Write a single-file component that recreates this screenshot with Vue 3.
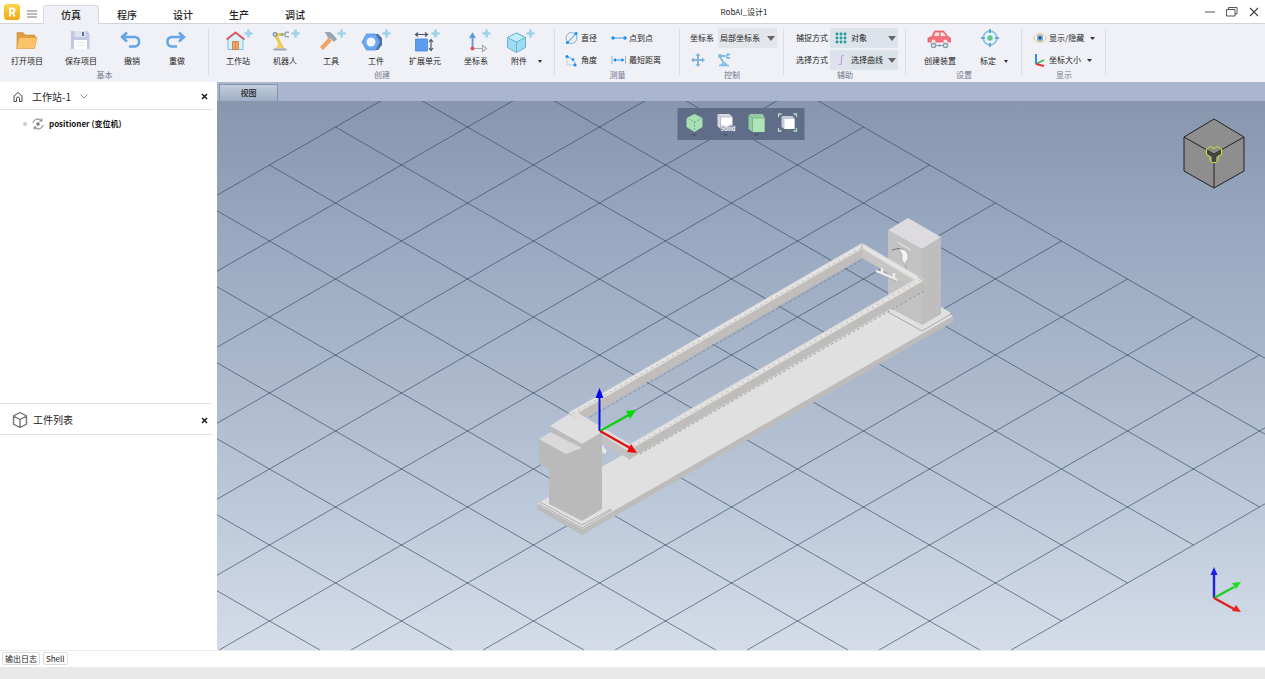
<script setup>
import { ref } from 'vue'

const tabs = ['仿真', '程序', '设计', '生产', '调试']
const activeTab = ref(0)
const frameMode = ref('局部坐标系')
const snapMode = ref('对象')
const pickMode = ref('选择曲线')

// Ground grid: 12 x 12 isometric cells around the scene origin
const origin = { x: 599.5, y: 431 }
const cell = { x: 66, y: 38 }
const half = 6
const project = (i, j) => ({
  x: origin.x + (i + j) * cell.x,
  y: origin.y + (i - j) * cell.y
})
const gridLines = []
for (let k = -half; k <= half; k++) {
  gridLines.push([project(k, -half), project(k, half)])
  gridLines.push([project(-half, k), project(half, k)])
}
</script>

<template>
  <div class="app">
    <header class="titlebar">
      <svg class="logo" width="16" height="17" viewBox="0 0 16 17" aria-hidden="true">
        <defs>
          <linearGradient id="logoFill" x1="0" y1="0" x2="0" y2="1">
            <stop offset="0" stop-color="#ffd54a" /><stop offset="1" stop-color="#f0a71c" />
          </linearGradient>
        </defs>
        <rect y="1" width="16" height="16" rx="3" fill="url(#logoFill)" />
        <path d="M6 13.500V5.500h2.500a2 2 0 0 1 0 4.200H6M8.500 9.700l2.200 3.800" fill="none" stroke="#fff" stroke-width="1.800" />
      </svg>
      <button class="icon-btn menu" aria-label="菜单">
        <svg width="10" height="8" viewBox="0 0 10 8"><path d="M0 1h10M0 4h10M0 7h10" stroke="#777" /></svg>
      </button>
      <nav class="tabs">
        <button v-for="(t, i) in tabs" :key="t" class="tab" :class="{ active: i === activeTab }" @click="activeTab = i">{{ t }}</button>
      </nav>
      <div class="title">RobAI_设计1</div>
      <div class="window-controls">
        <button class="icon-btn" aria-label="最小化"><svg width="12" height="12" viewBox="0 0 12 12"><path d="M1 6h10" stroke="#555" /></svg></button>
        <button class="icon-btn" aria-label="还原"><svg width="12" height="12" viewBox="0 0 12 12"><path d="M.5 3.500h8.500v6.500h-8.500zM2.500 3.500v-2h8.500v6.500h-2" fill="none" stroke="#555" /></svg></button>
        <button class="icon-btn" aria-label="关闭"><svg width="12" height="12" viewBox="0 0 12 12"><path d="M2 2l8 8M10 2l-8 8" stroke="#444" stroke-width="1.200" /></svg></button>
      </div>
    </header>

    <svg width="0" height="0" class="defs" aria-hidden="true">
      <symbol id="plus" viewBox="0 0 10 10"><path d="M5 .5v9M.5 5h9" stroke="#9fd3e8" stroke-width="3" /></symbol>
    </svg>

    <section class="ribbon">
      <div class="group">
        <div class="big-row basics">
          <button class="big">
            <svg width="32" height="24" viewBox="0 0 32 24">
              <path d="M6 19V3.500h6l2 2.500h10v4" fill="#e0a040" stroke="#c98a35" stroke-width=".6" />
              <path d="M5.500 19.500l2.500-11h18l-2.500 11z" fill="#fbc469" stroke="#d9963c" stroke-width=".6" />
            </svg>
            <span>打开项目</span>
          </button>
          <button class="big">
            <svg width="32" height="24" viewBox="0 0 32 24">
              <path d="M6 2h16l2.500 2.500V20H6z" fill="#c3c7e4" />
              <path d="M9.500 2h11v6h-11z" fill="#dfe3f0" /><path d="M17 3h2v4h-2z" fill="#5d6c94" />
              <path d="M9 11h13v9H9z" fill="#fff" /><path d="M11 13.500h9M11 16h9" stroke="#dcdfe9" stroke-width=".8" />
            </svg>
            <span>保存项目</span>
          </button>
          <button class="big">
            <svg width="32" height="24" viewBox="0 0 32 24"><path d="M11 3.500L6 8l5 4.500M7 8h12a4.800 4.800 0 0 1 0 9.500H13" fill="none" stroke="#62a4e4" stroke-width="2.500" /></svg>
            <span>撤销</span>
          </button>
          <button class="big">
            <svg width="32" height="24" viewBox="0 0 32 24"><path d="M18 3.500L23 8l-5 4.500M22 8H10.500a4.800 4.800 0 0 0 0 9.500h5.500" fill="none" stroke="#62a4e4" stroke-width="2.500" /></svg>
            <span>重做</span>
          </button>
        </div>
        <div class="caption">基本</div>
      </div>

      <div class="group">
        <div class="big-row create">
          <button class="big">
            <svg width="32" height="24" viewBox="0 0 32 24">
              <path d="M6 10l7.500-6L21 10v10.500H6z" fill="#d5f1fa" stroke="#7cc3de" />
              <path d="M10.500 12.500h6v8h-6z" fill="#f5a25f" stroke="#c9763f" stroke-width=".8" /><path d="M13.500 13v7" stroke="#c9763f" stroke-width=".6" />
              <path d="M4.500 10.500l9-7 9 7" fill="none" stroke="#e0525e" stroke-width="1.800" />
              <use href="#plus" x="22" y="0" width="9" height="9" />
            </svg>
            <span>工作站</span>
          </button>
          <button class="big">
            <svg width="32" height="24" viewBox="0 0 32 24">
              <path d="M6 5.500h9M7 7l5 9.500" stroke="#ecca4f" stroke-width="3.200" fill="none" />
              <path d="M7 19.500l1.500-4h5l2 4z" fill="#edcf62" /><path d="M4.500 20.500h13" stroke="#9aa6b5" stroke-width="2" />
              <circle cx="6" cy="5.500" r="2.400" fill="#7f93a8" /><circle cx="6" cy="5.500" r="1" fill="#e8edf2" />
              <circle cx="13" cy="5.500" r="1.300" fill="#8b9caf" />
              <path d="M20 3.200h-3l-1 1v2.600l1 1h3" fill="none" stroke="#97a5b5" stroke-width="1.500" />
              <use href="#plus" x="22" y="0" width="9" height="9" />
            </svg>
            <span>机器人</span>
          </button>
          <button class="big">
            <svg width="32" height="24" viewBox="0 0 32 24">
              <path d="M6.500 19.500L15.500 10" stroke="#f1a262" stroke-width="4.200" />
              <path d="M9.500 3.500q5-2 7.500 1l5 5.500-3 3-3-3.500-3.500-1q-.5-3-3-5z" fill="#98a5b2" />
              <use href="#plus" x="22" y="0" width="9" height="9" />
            </svg>
            <span>工具</span>
          </button>
          <button class="big">
            <svg width="32" height="24" viewBox="0 0 32 24">
              <path d="M11 5h7l4 4v7l-4 5h-7z" fill="#54708f" />
              <path d="M6.500 5h9l4.500 8-4.500 8h-9L2 13z" fill="#6aa7f5" stroke="#4b8ee6" stroke-width=".8" />
              <circle cx="11" cy="13" r="4.500" fill="#f2f5fb" />
              <use href="#plus" x="22" y="0" width="9" height="9" />
            </svg>
            <span>工件</span>
          </button>
          <button class="big">
            <svg width="32" height="24" viewBox="0 0 32 24">
              <path d="M6.500 10h12v12h-12z" fill="#5b9cf0" stroke="#4487dc" stroke-width=".8" />
              <path d="M7 5.500h11M9 3.500l-2.500 2L9 7.500M16 3.500l2.500 2-2.500 2M22 11v10M20 13l2-2.500 2 2.500M20 19l2 2.500 2-2.500" fill="none" stroke="#47596d" stroke-width="1.200" />
              <use href="#plus" x="22" y="0" width="9" height="9" />
            </svg>
            <span>扩展单元</span>
          </button>
          <button class="big">
            <svg width="32" height="24" viewBox="0 0 32 24">
              <path d="M12.500 19V7M10 9l2.500-4L15 9" fill="none" stroke="#5f95dd" stroke-width="1.800" />
              <path d="M13 19.500h10M22.500 16.500l4 3-4 3z" fill="#fff" stroke="#aaa" stroke-width="1.200" />
              <circle cx="12.500" cy="19.500" r="2" fill="#e04b5a" />
              <use href="#plus" x="22" y="0" width="9" height="9" />
            </svg>
            <span>坐标系</span>
          </button>
          <button class="big">
            <svg width="32" height="24" viewBox="0 0 32 24">
              <path d="M13.500 4l9 4.500v10l-9 5-9-5v-10z" fill="#9ddcf2" stroke="#68b4d0" />
              <path d="M13.500 4l9 4.500-9 4.500-9-4.500z" fill="#c3edf9" stroke="#68b4d0" /><path d="M13.500 13v10" stroke="#68b4d0" />
              <use href="#plus" x="23" y="0" width="9" height="9" />
            </svg>
            <span>附件</span>
          </button>
          <button class="drop" aria-label="更多附件"><svg width="4" height="3" viewBox="0 0 4 3"><path d="M0 0h4L2 3z" fill="#333" /></svg></button>
        </div>
        <div class="caption">创建</div>
      </div>

      <div class="group">
        <div class="small-grid measure">
          <button class="small">
            <svg width="14" height="14" viewBox="0 0 14 14"><circle cx="6.500" cy="7" r="5.500" fill="none" stroke="#88aecb" /><path d="M2.500 11.500l8.500-9" stroke="#2793ef" /><circle cx="2.500" cy="11.500" r="1.600" fill="#1b8df2" /><circle cx="11" cy="2.500" r="1.600" fill="#1b8df2" /></svg>
            直径
          </button>
          <button class="small">
            <svg width="16" height="14" viewBox="0 0 16 14"><path d="M2 7h12" stroke="#3c9bef" /><circle cx="2" cy="7" r="1.700" fill="#1b8df2" /><circle cx="14" cy="7" r="1.700" fill="#1b8df2" /></svg>
            点到点
          </button>
          <button class="small">
            <svg width="14" height="14" viewBox="0 0 14 14"><path d="M2 3v9h9" fill="none" stroke="#c3d0db" /><path d="M2 4q7 1 8.500 8" fill="none" stroke="#65aee9" /><circle cx="2" cy="3.500" r="1.600" fill="#1b8df2" /><circle cx="8" cy="6.500" r="1.300" fill="#1b8df2" /><circle cx="10" cy="12" r="1.600" fill="#1b8df2" /></svg>
            角度
          </button>
          <button class="small">
            <svg width="16" height="14" viewBox="0 0 16 14"><path d="M1 3v8M14.500 3v8" stroke="#9fb3c6" /><path d="M3 7h10" stroke="#2793ef" /><path d="M2 7l3-2v4zM13.500 7l-3-2v4z" fill="#1b8df2" /></svg>
            最短距离
          </button>
        </div>
        <div class="caption">测量</div>
      </div>

      <div class="group">
        <div class="rows control">
          <div class="field">
            <label for="frame">坐标系</label>
            <div class="picker pale">
              <select id="frame" v-model="frameMode"><option>局部坐标系</option></select>
              <svg class="arrow" width="8" height="5" viewBox="0 0 8 5"><path d="M0 0h8L4 5z" fill="#666" /></svg>
            </div>
          </div>
          <div class="tools">
            <button class="icon-btn" aria-label="移动"><svg width="14" height="14" viewBox="0 0 14 14"><path d="M7 2v10M2 7h10" stroke="#84b6dc" stroke-width="2" /><path d="M7 0l2.800 3H4.200zM7 14l2.800-3H4.200zM0 7l3-2.800v5.600zM14 7l-3-2.800v5.600z" fill="#84b6dc" /></svg></button>
            <button class="icon-btn" aria-label="机器人关节"><svg width="14" height="14" viewBox="0 0 14 14"><path d="M2 3h6M3 4l4 6M13 1.500h-2.500l-1 1v1.500l1 1H13" fill="none" stroke="#7cbbe6" stroke-width="1.800" /><circle cx="3" cy="3" r="2" fill="#7cbbe6" /><path d="M3 12.500l2-3h4l2 3z" fill="#8cc4ea" /><path d="M2 12.500h10" stroke="#7cbbe6" stroke-width="1.500" /></svg></button>
          </div>
        </div>
        <div class="caption">控制</div>
      </div>

      <div class="group">
        <div class="rows assist">
          <div class="field">
            <label for="snap">捕捉方式</label>
            <div class="picker">
              <svg width="12" height="12" viewBox="0 0 12 12"><path d="M2 0v12M6 0v12M10 0v12M0 2h12M0 6h12M0 10h12" stroke="#b5d4da" stroke-width=".8" /><g fill="#259b9d"><circle v-for="n in 9" :key="n" :cx="2 + ((n - 1) % 3) * 4" :cy="2 + Math.floor((n - 1) / 3) * 4" r="1.400" /></g></svg>
              <select id="snap" v-model="snapMode"><option>对象</option></select>
              <svg class="arrow" width="8" height="5" viewBox="0 0 8 5"><path d="M0 0h8L4 5z" fill="#666" /></svg>
            </div>
          </div>
          <div class="field">
            <label for="pick">选择方式</label>
            <div class="picker">
              <svg width="12" height="12" viewBox="0 0 12 12"><path d="M3.500 10.500h1q2 0 2-2v-5q0-2 2-2h1" fill="none" stroke="#c99be6" stroke-width="1.200" /></svg>
              <select id="pick" v-model="pickMode"><option>选择曲线</option></select>
              <svg class="arrow" width="8" height="5" viewBox="0 0 8 5"><path d="M0 0h8L4 5z" fill="#666" /></svg>
            </div>
          </div>
        </div>
        <div class="caption">辅助</div>
      </div>

      <div class="group">
        <div class="big-row settings">
          <button class="big">
            <svg width="32" height="24" viewBox="0 0 32 24">
              <path d="M4 13V9l4-1.500L10.500 2h9L24 7.500l2.500 1.500v4z" fill="#f5717c" stroke="#df5965" stroke-width=".8" />
              <path d="M10 7l1.500-3.500H15V7zM16.500 3.500h2.500L22 7h-5.500z" fill="#fbe5e7" />
              <circle cx="9.500" cy="12.500" r="2" fill="#fbe5e7" /><circle cx="21.500" cy="12.500" r="2" fill="#fbe5e7" />
              <path d="M9.500 16.500h12" stroke="#8ba0b5" /><circle cx="9.500" cy="16.500" r="2.200" fill="#dbe4ec" stroke="#8298af" stroke-width="1.200" /><circle cx="21.500" cy="16.500" r="2.200" fill="#dbe4ec" stroke="#8298af" stroke-width="1.200" /><circle cx="15.500" cy="16.500" r="1" fill="#6d86a0" />
            </svg>
            <span>创建装置</span>
          </button>
          <button class="big">
            <svg width="32" height="24" viewBox="0 0 32 24"><circle cx="18" cy="9" r="6.800" fill="#e4f4fb" stroke="#8ec5e4" stroke-width="1.800" /><path d="M18 0v4M18 14v4M9 9h4M23 9h4" stroke="#4e93c8" stroke-width="1.500" /><circle cx="18" cy="9" r="2.700" fill="#66c391" /></svg>
            <span>标定</span>
          </button>
          <button class="drop" aria-label="更多标定"><svg width="4" height="3" viewBox="0 0 4 3"><path d="M0 0h4L2 3z" fill="#333" /></svg></button>
        </div>
        <div class="caption">设置</div>
      </div>

      <div class="group">
        <div class="rows display">
          <button class="small">
            <svg width="14" height="14" viewBox="0 0 14 14"><path d="M.5 7q6.500-8.500 13 0-6.500 8.500-13 0z" fill="#fff" stroke="#dcae5c" /><circle cx="7" cy="7" r="3" fill="#5b9bd8" /><circle cx="7" cy="7" r="1.300" fill="#24507e" /></svg>
            显示/隐藏
            <svg class="caret" width="5" height="3" viewBox="0 0 5 3"><path d="M0 0h5L2.500 3z" fill="#333" /></svg>
          </button>
          <button class="small">
            <svg width="14" height="14" viewBox="0 0 14 14"><path d="M3 1v10" stroke="#1c86d8" stroke-width="1.800" /><path d="M3 11l8-4" stroke="#3fb85c" stroke-width="1.800" /><path d="M3 11l8 2" stroke="#e3333a" stroke-width="2" /></svg>
            坐标大小
            <svg class="caret" width="5" height="3" viewBox="0 0 5 3"><path d="M0 0h5L2.500 3z" fill="#333" /></svg>
          </button>
        </div>
        <div class="caption">显示</div>
      </div>
    </section>

    <main class="workspace">
      <aside class="side">
        <section class="panel">
          <div class="panel-head">
            <svg width="12" height="12" viewBox="0 0 12 12"><path d="M2 10.500V5l4-3.500L10 5v5.500H7.500V7.500a1.500 1.500 0 0 0-3 0v3z" fill="none" stroke="#444" /></svg>
            <h2>工作站-1</h2>
            <svg width="8" height="5" viewBox="0 0 8 5"><path d="M.5.5L4 4 7.500.5" fill="none" stroke="#999" /></svg>
            <button class="icon-btn close" aria-label="关闭工作站"><svg width="7" height="7" viewBox="0 0 7 7"><path d="M1 1l5 5M6 1L1 6" stroke="#111" stroke-width="1.400" /></svg></button>
          </div>
          <ul class="tree">
            <li>
              <span class="dot"></span>
              <svg width="12" height="12" viewBox="0 0 12 12"><path d="M1 5A5 5 0 0 1 9.500 2.500M11 7A5 5 0 0 1 2.500 9.500M9.800.5v2.500H7.300M2.200 11.500V9h2.500" fill="none" stroke="#777" /><circle cx="6" cy="6" r="1.700" fill="#777" /></svg>
              <strong>positioner (变位机)</strong>
            </li>
          </ul>
        </section>
        <section class="panel parts">
          <div class="panel-head">
            <svg width="16" height="18" viewBox="0 0 16 18"><path d="M8 1.500l6.500 3.500v8L8 16.500 1.500 13V5zM1.500 5L8 8.500 14.500 5M8 8.500v8" fill="none" stroke="#777" stroke-width="1.400" /></svg>
            <h2>工件列表</h2>
            <button class="icon-btn close" aria-label="关闭工件列表"><svg width="7" height="7" viewBox="0 0 7 7"><path d="M1 1l5 5M6 1L1 6" stroke="#111" stroke-width="1.400" /></svg></button>
          </div>
        </section>
      </aside>

      <section class="view">
        <div class="view-tabs"><button class="view-tab">视图</button></div>
        <div class="canvas">
          <svg class="scene" viewBox="217 101 1048 549" preserveAspectRatio="xMidYMid slice" aria-label="三维场景">
            <g stroke="#34485f" stroke-opacity=".72" stroke-width=".9">
              <line v-for="(l, n) in gridLines" :key="n" :x1="l[0].x" :y1="l[0].y" :x2="l[1].x" :y2="l[1].y" />
            </g>
            <!-- base plate -->
            <path d="M537 504l45 25v6l-45-26z" fill="#bcbbbb" />
            <path d="M582 529l371-213v6L582 535z" fill="#bdbcbb" />
            <path d="M537 504l371-213 45 25-371 213z" fill="#e0e0e0" />
            <!-- far column -->
            <path d="M888 308l34 20 29-15-11-7-19 11-33-14z" fill="#e0dfdf" />
            <path d="M888 312l34 19 29-17" fill="none" stroke="#aaa9a9" />
            <path d="M888 230l34 19v76l-34-18z" fill="#c3c2c3" />
            <path d="M922 249l19-12v77l-19 11z" fill="#bfbdbe" />
            <path d="M888 230l20-12 33 19-19 12z" fill="#dddbdd" />
            <path d="M897 242l14 8" fill="none" stroke="#ecebeb" />
            <path d="M892 250q6-3 12 0" fill="none" stroke="#666" stroke-width=".8" />
            <path d="M899 249q7-1 9 6 1 5-3 8l2 7-3-6q-3-4-2-9z" fill="#f2f2f2" stroke="#8d8d8d" stroke-width=".5" />
            <!-- rotating frame: inner walls, outer walls, top -->
            <path d="M862 249l52 31v8l-52-30z" fill="#c7c5c3" />
            <path d="M578 413l284-164v9L578 422z" fill="#c0bdba" />
            <path d="M876 271l21 9M882 273v-5M894 279v-6" fill="none" stroke="#ededed" stroke-width="2.500" />
            <path d="M875 272l21 9" fill="none" stroke="#8e8e8e" stroke-width=".6" />
            <path d="M590 427l41 23v10l-41-23z" fill="#c3c2c2" />
            <path d="M628 450l297-170v9L628 460z" fill="#bfbdbb" />
            <path d="M568 413l294-170 63 37-297 171zM578 413l52 31 284-164-52-31z" fill="#dfdedc" fill-rule="evenodd" />
            <path d="M573 412l289-166 58 34-290 167" fill="none" stroke="#f3f2f0" stroke-width=".8" />
            <path d="M573 413l289-166M633 446l287-166" fill="none" stroke="#8b8b88" stroke-width=".5" stroke-dasharray="2 4" />
            <path d="M590 417l272-157M640 454l284-163" fill="none" stroke="#77736f" stroke-width=".6" stroke-dasharray="3 2" />
            <path d="M862 243v6M918 277l6 4" stroke="#aaa8a5" stroke-width=".8" />
            <path d="M601 443l6 8-2 3-4-2z" fill="#e7e7e7" />
            <!-- near column -->
            <path d="M540 502l9-5 53 3 10 9-30 16z" fill="#e2e1e1" />
            <path d="M539 504l43 24 30-18M582 525l29-16M540 502l42 23" fill="none" stroke="#a3a2a2" stroke-width=".8" />
            <path d="M539 439l11-3 52-5v78l-20 12-33-17v-36l-10-4z" fill="#bababa" />
            <path d="M550 426l19-12 33 18-20 12z" fill="#dedfde" />
            <path d="M539 439l12-7 31 16-16 6z" fill="#dad9da" />
            <path d="M550 426l32 18v4l-32-16z" fill="#bdbcbd" />
            <!-- origin axes -->
            <path d="M599.500 431v-36" stroke="#1010e0" stroke-width="2" /><path d="M599.500 388l4 10h-8z" fill="#0505f0" />
            <path d="M600 431l29-16" stroke="#10d010" stroke-width="2" /><path d="M636 410l-10 1 4 8z" fill="#00dc00" />
            <path d="M600 431l30 17" stroke="#df1010" stroke-width="2.200" /><path d="M637 453l-6-9-4 8z" fill="#f00808" />
          </svg>

          <div class="view-tools">
            <button aria-label="视角"><svg width="20" height="28" viewBox="0 0 20 28"><path d="M10 5l8 4v9l-8 5-8-5V9z" fill="#a9dfb4" /><path d="M2 9l8 4 8-4M10 13v9" fill="none" stroke="#5f9770" stroke-width=".8" stroke-dasharray="1.500 1.500" /><path d="M7 25h6l-3 2z" fill="#46536b" /></svg></button>
            <button aria-label="渲染模式"><svg width="20" height="28" viewBox="0 0 20 28"><path d="M2 5h12l3 3v12H5l-3-3z" fill="#d7d9e1" /><path d="M5 8h12v12H5zM2 5l3 3" fill="#fff" stroke="#9a9eac" stroke-width=".6" /><text x="5" y="22" font-size="6" font-weight="700" fill="#fff" stroke="#6f7b93" stroke-width="1" paint-order="stroke">Solid</text><path d="M7 25h6l-3 2z" fill="#46536b" /></svg></button>
            <button aria-label="显示面"><svg width="20" height="28" viewBox="0 0 20 28"><path d="M2 7l2-2h12l2 3v15H6l-4-3z" fill="#96cca4" /><path d="M6 9h12v14H6z" fill="#afe6b8" /><path d="M2 6l4 3h12M6 9v14" fill="none" stroke="#6fa881" stroke-width=".7" /><path d="M7 25h6l-3 2z" fill="#46536b" /></svg></button>
            <button aria-label="适应窗口"><svg width="20" height="28" viewBox="0 0 20 28"><path d="M1 8V5h3M16 5h3v3M1 19v3h3M16 22h3v-3" fill="none" stroke="#b7e2c0" stroke-width="1.300" /><path d="M4 8l1-1h10l2 2v11H7l-3-2z" fill="#c7c9d4" /><path d="M7 10h10v10H7z" fill="#fff" /></svg></button>
          </div>

          <svg class="nav-cube" width="64" height="72" viewBox="0 0 64 72" aria-label="导航方块">
            <path d="M32 1l30 18v34L32 70 2 53V19z" fill="#8e8e8e" stroke="#222" />
            <path d="M2 19l30 17 30-17M32 36v34" fill="none" stroke="#222" />
            <path d="M25 32l7 3.500 7-3.500v4l-5 3v5h-4v-5l-5-3z" fill="#444" />
            <path d="M24.500 31l4-2.500 3.500 2 3.500-2 4 2.500v5.500l-3.500 2v4l-2.500 2h-3l-2.500-2v-4l-3.500-2z" fill="none" stroke="#d6e322" />
          </svg>
          <svg class="triad" width="32" height="50" viewBox="0 0 32 50" aria-hidden="true">
            <path d="M4 32V8" stroke="#2222dd" stroke-width="2.400" /><path d="M4 1l3.500 8h-7z" fill="#1d1dea" />
            <path d="M4 32l20-11" stroke="#20d020" stroke-width="2.400" /><path d="M31 16l-9 1 4 6z" fill="#1fdc25" />
            <path d="M4 32l20 11" stroke="#e02020" stroke-width="2.400" /><path d="M31 46l-9-1 4-6z" transform="translate(0 0)" fill="#f01f1f" />
          </svg>
        </div>
      </section>
    </main>

    <div class="log-tabs">
      <button>输出日志</button>
      <button>Shell</button>
    </div>
    <footer class="status"></footer>
  </div>
</template>

<style>
body { margin: 0; }
</style>

<style scoped>
.app {
  display: flex;
  flex-direction: column;
  height: 100vh;
  overflow: hidden;
  background: #fff;
  color: #222;
  font: 8px/12px "Noto Sans CJK SC", sans-serif;
}
button, select {
  margin: 0;
  padding: 0;
  border: 0;
  background: none;
  color: inherit;
  font: inherit;
}
svg { display: block; flex: none; }
.defs { position: absolute; }
.icon-btn { display: grid; place-items: center; }

.titlebar { display: flex; align-items: center; height: 24px; border-bottom: 1px solid #d3d4d8; box-sizing: border-box; }
.logo { margin-left: 4px; }
.menu { width: 23px; height: 20px; padding-top: 5px; }
.tabs { display: flex; align-self: flex-end; margin-bottom: -1px; }
.tab { width: 56px; height: 19px; font-size: 10px; font-weight: 500; line-height: 18px; border: 1px solid transparent; border-bottom: 0; border-radius: 3px 3px 0 0; }
.tab.active { background: #f0f1f6; border-color: #d8d9e4; }
.title { flex: 1; padding-right: 34px; text-align: center; }
.window-controls { display: flex; }
.window-controls button { width: 22px; height: 22px; }

.ribbon { display: flex; flex: none; height: 58px; background: #f0f1f6; }
.group { position: relative; display: flex; flex-direction: column; }
.group::after { content: ""; position: absolute; right: 0; top: 5px; bottom: 7px; width: 1px; background: #dcdde3; }
.big-row { display: grid; height: 46px; box-sizing: border-box; padding-top: 5px; }
.big { display: flex; flex-direction: column; align-items: center; gap: 2px; height: 38px; white-space: nowrap; }
.drop { padding-top: 30px; height: 34px; }
.basics { grid-template-columns: 54px 54px 48px 42px; padding-right: 11px; }
.create { grid-template-columns: 48px 46px 46px 44px 54px 48px 38px 4px; padding-left: 5px; padding-right: 13px; }
.settings { grid-template-columns: 68px 28px 8px; justify-items: center; padding-right: 12px; }
.caption { color: #70758a; line-height: 10px; text-align: center; }
.small-grid, .rows { display: grid; row-gap: 2px; grid-auto-rows: 20px; padding-top: 4px; height: 42px; white-space: nowrap; }
.small { display: flex; align-items: center; gap: 2px; }
.measure { grid-template-columns: auto auto; column-gap: 14px; padding-left: 10px; padding-right: 19px; }
.caret { margin-left: 4px; }
.field { display: flex; align-items: center; }
.picker { display: flex; align-items: center; gap: 4px; width: 68px; height: 20px; padding: 0 2px 0 5px; box-sizing: border-box; margin-left: 2px; background: #dde3ea; }
.picker select { flex: 1; min-width: 0; height: 20px; appearance: none; }
.picker.pale { width: 59px; padding-left: 2px; margin-left: 4px; gap: 0; background: #e3e5ea; }
.arrow { pointer-events: none; }
.control { padding-left: 10px; padding-right: 7px; }
.tools { display: flex; align-items: center; gap: 12px; padding-left: 1px; }
.assist { padding-left: 12px; padding-right: 8px; }
.display { padding-left: 11px; padding-right: 11px; }

.workspace { flex: 1; display: flex; min-height: 0; }
.side { width: 217px; flex: none; display: flex; flex-direction: column; }
.panel { flex: 322 1 0; min-height: 0; margin-right: 5px; }
.parts { flex-grow: 246; border-top: 1px solid #e2e2e2; }
.panel-head { display: flex; align-items: center; height: 28px; padding: 2px 2px 0 12px; border-bottom: 1px solid #e2e2e2; box-sizing: border-box; }
.parts .panel-head { height: 31px; }
.panel-head h2 { margin: 0 9px 0 8px; font-size: 10px; font-weight: 400; line-height: 16px; }
.parts .panel-head h2 { margin-left: 5px; }
.close { width: 11px; height: 16px; margin-left: auto; }
.tree { margin: 0; padding: 8px 0 0 23px; list-style: none; }
.tree li { display: flex; align-items: center; }
.tree strong { margin-left: 5px; color: #111; }
.dot { width: 4px; height: 4px; margin-right: 5px; border-radius: 50%; background: #ccc; }

.view { flex: 1; min-width: 0; display: flex; flex-direction: column; }
.view-tabs { height: 19px; flex: none; padding: 2px 2px 0; box-sizing: border-box; background: #aab6cf; }
.view-tab { width: 59px; height: 17px; box-sizing: border-box; border: 1px solid #8495ad; border-bottom: 0; background: linear-gradient(#c1cddb, #9eafc5); font-weight: 500; }
.canvas { position: relative; flex: 1; min-height: 0; background: linear-gradient(#8896ae, #98a9c1 25%, #abb8cc 50%, #bdcadb 75%, #d5dce8); }
.scene { position: absolute; inset: 0; width: 100%; height: 100%; }
.view-tools { position: absolute; top: 7px; left: 50%; transform: translateX(-50%); display: flex; gap: 11px; padding: 0 7px; height: 32px; background: #5f6d88; }
.view-tools button { height: 30px; }
.nav-cube { position: absolute; top: 17px; right: 19px; }
.triad { position: absolute; right: 23px; bottom: 34px; }

.log-tabs { display: flex; gap: 3px; flex: none; height: 17px; padding: 1px 2px 2px; box-sizing: border-box; border-top: 1px solid #eee; }
.log-tabs button { padding: 0 2px; border: 1px solid #ddd; border-radius: 2px; }
.status { flex: none; height: 12px; background: #e9e9e9; }
</style>
